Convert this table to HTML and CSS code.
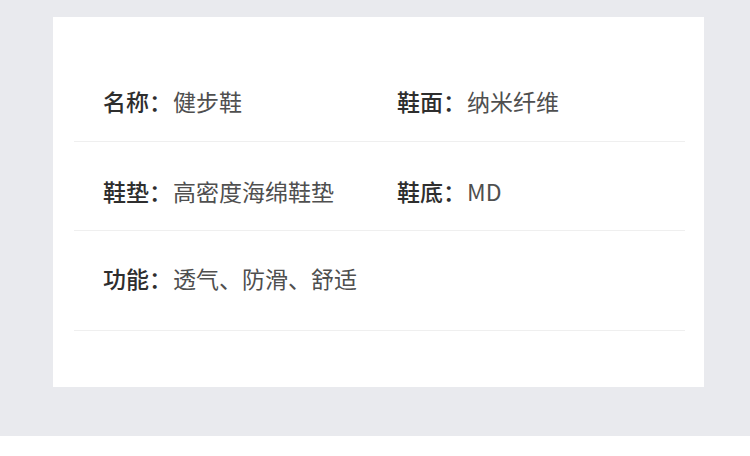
FILE: index.html
```html
<!DOCTYPE html>
<html lang="zh-CN">
<head>
<meta charset="utf-8">
<link rel="stylesheet" href="styles.css">
</head>
<body>
<div class="page">
  <div class="card">
    <div class="row row-first">
      <div class="item"><span class="label">名称：</span><span class="value">健步鞋</span></div>
      <div class="item"><span class="label">鞋面：</span><span class="value">纳米纤维</span></div>
    </div>
    <div class="row">
      <div class="item"><span class="label">鞋垫：</span><span class="value">高密度海绵鞋垫</span></div>
      <div class="item"><span class="label">鞋底：</span><span class="value">MD</span></div>
    </div>
    <div class="row row-last">
      <div class="item"><span class="label">功能：</span><span class="value">透气、防滑、舒适</span></div>
    </div>
  </div>
</div>
</body>
</html>
```

FILE: styles.css
```css
html, body {
  margin: 0;
  padding: 0;
  background: #ffffff;
}
body {
  width: 750px;
  height: 456px;
  overflow: hidden;
  font-family: "Noto Sans CJK SC", "Noto Sans", sans-serif;
}
.page {
  background: #e9eaee;
  height: 436px;
  box-sizing: border-box;
  padding: 17px 46px 0 53px;
}
.card {
  background: #ffffff;
  height: 370px;
  box-sizing: border-box;
  padding: 35px 19px 0 21px;
}
.row {
  display: grid;
  grid-template-columns: 294px 1fr;
  padding: 34px 0 24px 29px;
  border-bottom: 1px solid #efefef;
  font-size: 23px;
  line-height: 30px;
}
.row-first {
  padding-bottom: 25px;
}
.row-last {
  padding-top: 32px;
  padding-bottom: 37px;
}
.item {
  white-space: nowrap;
}
.label {
  display: inline-block;
  width: 70px;
  color: #2e2e2e;
  font-weight: 500;
}
.value {
  color: #4f4f4f;
  font-weight: 400;
}
```
